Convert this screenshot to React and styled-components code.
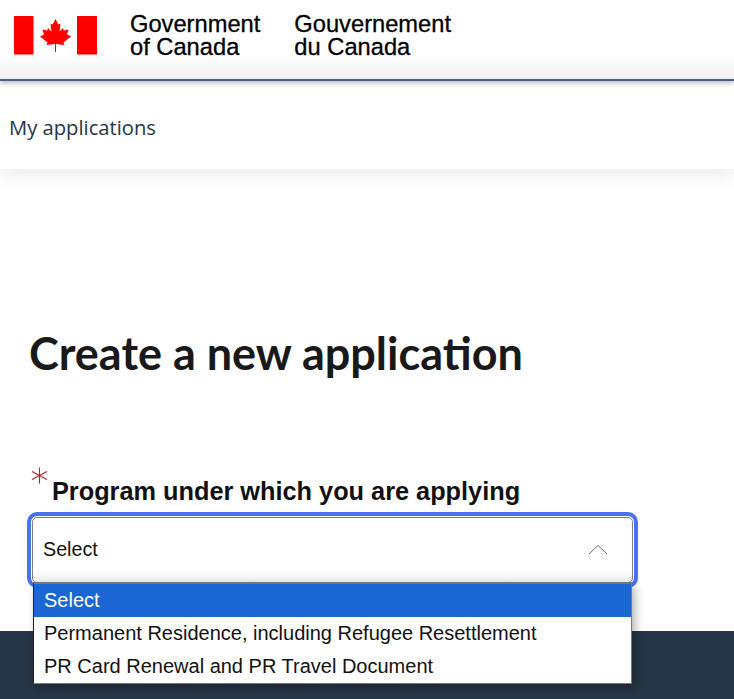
import React from "react";
import styled, { createGlobalStyle } from "styled-components";

const Global = createGlobalStyle`
  html, body { margin: 0; padding: 0; background: #fff; }
  body { width: 734px; height: 699px; overflow: hidden; font-family: "Liberation Sans", Arial, sans-serif; }
`;
const Page = styled.div`
  width: 734px; height: 699px; overflow: hidden; display: flex; flex-direction: column; background: #fff;
`;
const Header = styled.header`
  height: 79px; flex: none; box-sizing: content-box; display: flex; align-items: flex-start;
  padding-left: 14px; border-bottom: 2px solid #4e5b8f;
  background: linear-gradient(#fff 0 55px, #f0f0f0 79px);
  box-shadow: 0 2px 5px rgba(0,0,0,.28); position: relative; z-index: 2;
`;
const Flag = styled.svg`
  width: 83px; height: 39px; margin-top: 16px; flex: none; display: block;
`;
const Wordmark = styled.div`
  margin-left: ${p => p.$gap}px; margin-top: 13px; color: #000;
  font: 400 23.7px/22.5px "Liberation Sans", Arial, sans-serif; white-space: pre-line;
  -webkit-text-stroke: 0.3px #000;
`;
const Nav = styled.nav`
  height: 88px; flex: none; box-sizing: border-box; display: flex; align-items: center; padding: 4px 0 0 9px; background: #fff;
  box-shadow: 0 8px 18px rgba(0,0,0,.07); position: relative; z-index: 1;
  font: 400 20.2px "Open Sans", sans-serif; color: #263648;
`;
const Main = styled.main`
  flex: 1; padding: 156px 0 0 29px; position: relative; background: #fff;
`;
const Title = styled.h1`
  margin: 0; color: #191919; font: 700 45px/56px Lato, sans-serif; font-variant-ligatures: common-ligatures;
`;
const Label = styled.div`
  margin-top: 86px; display: flex; align-items: flex-start; height: 50px; color: #111;
  font: 700 25.3px/30px "Liberation Sans", Arial, sans-serif;
`;
const Star = styled.svg`
  width: 17px; height: 17px; margin: 0 4px 0 2px; flex: none; display: block;
`;
const LabelText = styled.span` margin-top: 9px; `;
const Field = styled.div`
  position: relative; width: 601px; height: 66px; margin-left: 3px; box-sizing: border-box;
  display: flex; align-items: center; padding: 0 24px 2px 10px; justify-content: space-between;
  background: linear-gradient(#fff 0 78%, #f2f2f2); border: 1px solid #808080; border-radius: 5px;
  outline: 4px solid #4a72f0; outline-offset: 1px;
  font-size: 19.7px; color: #111;
`;
const Menu = styled.ul`
  position: absolute; left: 33px; top: 413px; width: 599px; margin: 0; padding: 0; list-style: none;
  box-sizing: border-box; background: #fff; z-index: 3;
  border: 1px solid #7a7a7a; border-left-color: #222; border-top: 2px solid #777;
  box-shadow: 3px 4px 9px rgba(0,0,0,.3);
`;
const Option = styled.li`
  height: 33px; line-height: 33px; padding-left: 10px; font-size: 20px; color: ${p => p.$active ? "#fff" : "#111"};
  background: ${p => p.$active ? "#1a66d2" : "#fff"}; white-space: nowrap;
`;
const Footer = styled.footer` height: 68px; flex: none; background: #263648; `;

export default function App() {
  return (
    <Page>
      <Global />
      <Header>
        <Flag viewBox="0 0 83 39" aria-label="Canada flag">
          <rect x="0" width="19.5" height="38.5" fill="#f00" />
          <rect x="63" width="20" height="38.5" fill="#f00" />
          <path transform="translate(26 3)" fill="#f00" d="M15.5 0 12.6 5.6 10.5 4.6 11.5 12.5 8 9 7.2 11.5 2.5 10.6 4 15.5 0 17.5 7.5 23.5 6.5 26 15 25 15 33 16 33 16 25 24.500 26 23.500 23.500 31 17.500 27 15.500 28.500 10.600 23.800 11.500 23 9 19.500 12.500 20.500 4.600 18.400 5.600Z" />
        </Flag>
        <Wordmark $gap={33}>{"Government\nof Canada"}</Wordmark>
        <Wordmark $gap={34}>{"Gouvernement\ndu Canada"}</Wordmark>
      </Header>
      <Nav>My applications</Nav>
      <Main>
        <Title>Create a new application</Title>
        <Label>
          <Star viewBox="0 0 17 17" fill="none" stroke="#a62a2a" strokeWidth="1.1" aria-label="required">
            <path d="M8.500 0.500V16.500M1 4.500 16 12.500M16 4.500 1 12.500" />
          </Star>
          <LabelText>Program under which you are applying</LabelText>
        </Label>
        <Field>
          <span>Select</span>
          <svg width="20" height="11" viewBox="0 0 20 11" fill="none" stroke="#666" strokeWidth="1"><path d="M1 10 10 1.500 19 10" /></svg>
        </Field>
        <Menu>
          <Option $active>Select</Option>
          <Option>Permanent Residence, including Refugee Resettlement</Option>
          <Option>PR Card Renewal and PR Travel Document</Option>
        </Menu>
      </Main>
      <Footer />
    </Page>
  );
}
